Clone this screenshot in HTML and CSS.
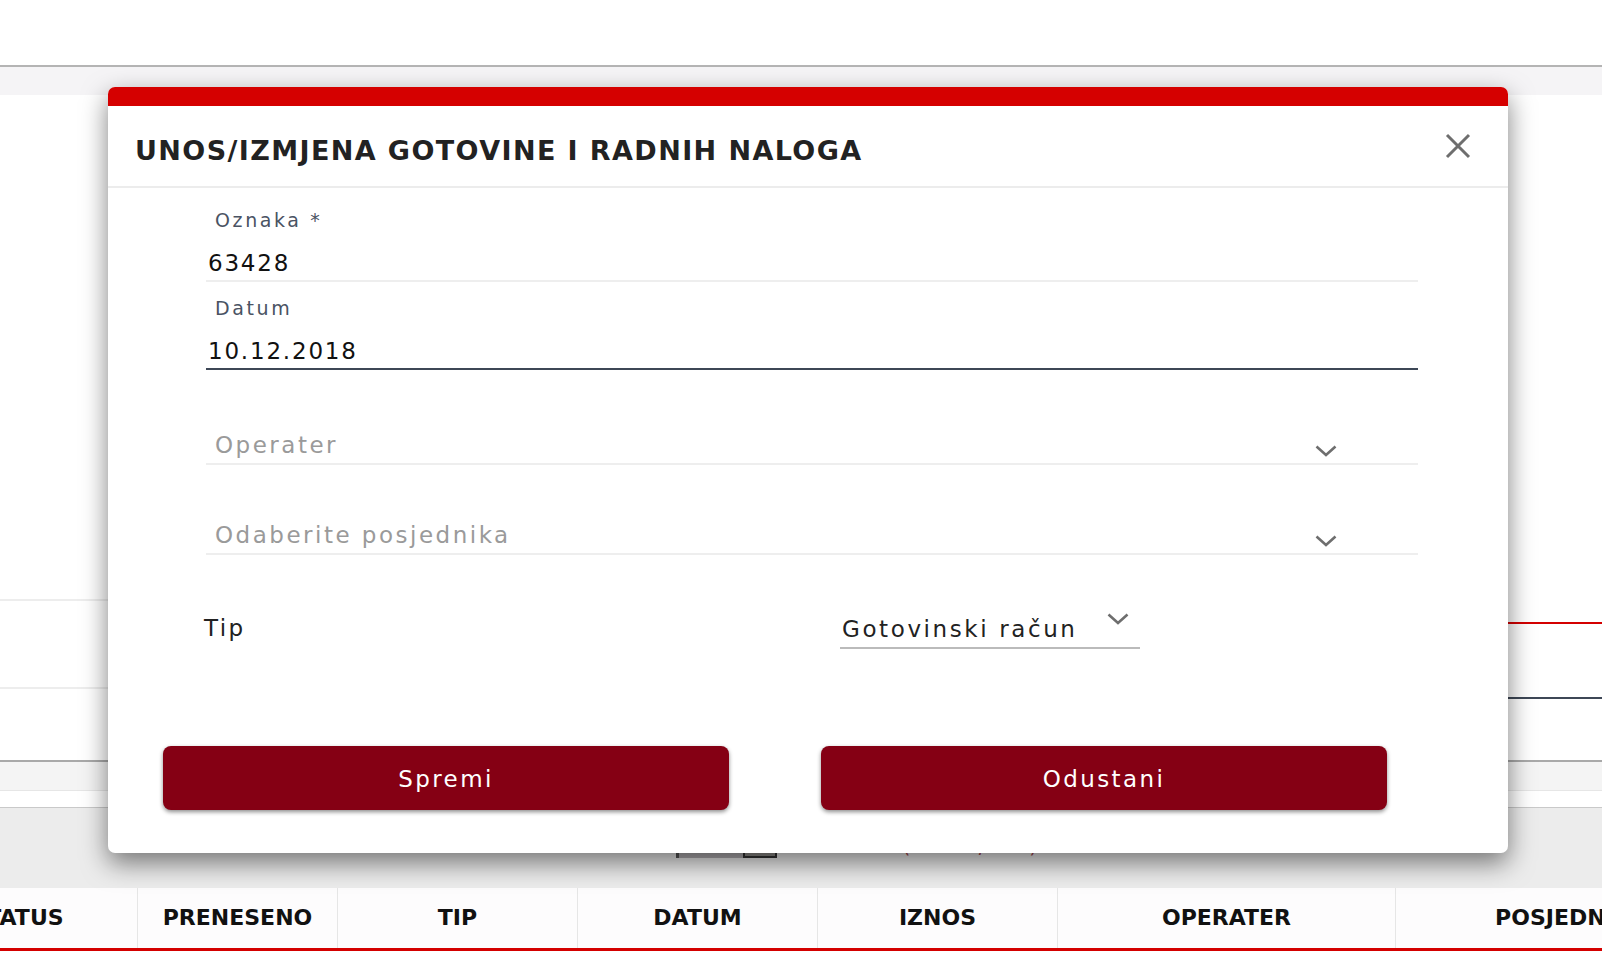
FILE: index.html
```html
<!DOCTYPE html>
<html lang="hr">
  <head>
    <meta charset="UTF-8" />
    <meta name="viewport" content="width=device-width, initial-scale=1.0" />
    <title>Gotovina i radni nalozi</title>
    <link rel="stylesheet" href="styles.css">
  </head>
  <body>
    <div class="topbar"></div>
    <div class="subnav"></div>

    <div class="content">
      <div class="list">
        <div class="list-row"></div>
        <div class="list-row"></div>
      </div>
      <div class="side">
        <div class="side-line red"></div>
        <div class="side-line dark"></div>
      </div>
    </div>

    <div class="toolbar"></div>
    <div class="pager-area">
      <div class="pager">
        <span class="pager-box"><span class="pager-btn"></span></span>
        <span class="pager-text">1 - 10 (od 1 / 25) stranica</span>
      </div>
    </div>

    <div class="grid-head">
      <div class="col col-status">STATUS</div>
      <div class="col col-preneseno">PRENESENO</div>
      <div class="col col-mid">TIP</div>
      <div class="col col-mid">DATUM</div>
      <div class="col col-mid">IZNOS</div>
      <div class="col col-operater">OPERATER</div>
      <div class="col col-posjednik">POSJEDNIK</div>
    </div>

    <!-- dialog -->
    <div class="modal">
      <div class="modal-bar"></div>
      <div class="modal-head">
        <h1 class="modal-title">UNOS/IZMJENA GOTOVINE I RADNIH NALOGA</h1>
        <svg class="close" width="26" height="26" viewBox="0 0 26 26">
          <path d="M2 2 L24 24 M24 2 L2 24" stroke="#6e6e6e" stroke-width="3" fill="none" />
        </svg>
      </div>

      <div class="modal-body">
        <div class="field">
          <div class="field-label">Oznaka *</div>
          <div class="field-value">63428</div>
        </div>
        <div class="field field-focus">
          <div class="field-label">Datum</div>
          <div class="field-value">10.12.2018</div>
        </div>

        <div class="select select-first">
          <span class="placeholder">Operater</span>
          <svg class="chevron" width="22" height="12" viewBox="0 0 22 12">
            <polyline points="1.5,1.5 11,10 20.5,1.5" stroke="#6e6e6e" stroke-width="2.6" fill="none" />
          </svg>
        </div>
        <div class="select">
          <span class="placeholder">Odaberite posjednika</span>
          <svg class="chevron" width="22" height="12" viewBox="0 0 22 12">
            <polyline points="1.5,1.5 11,10 20.5,1.5" stroke="#6e6e6e" stroke-width="2.6" fill="none" />
          </svg>
        </div>

        <div class="tip-row">
          <span class="tip-label">Tip</span>
          <div class="tip-select">
            <span class="tip-value">Gotovinski račun</span>
            <svg class="tip-chevron" width="22" height="12" viewBox="0 0 22 12">
              <polyline points="1.5,1.5 11,10 20.5,1.5" stroke="#6e6e6e" stroke-width="2.6" fill="none" />
            </svg>
          </div>
        </div>
      </div>

      <div class="modal-actions">
        <button class="btn">Spremi</button>
        <button class="btn">Odustani</button>
      </div>
    </div>
  </body>
</html>
```

FILE: styles.css
```css
body {
  margin: 0;
  padding: 0;
  width: 1602px;
  height: 956px;
  overflow: hidden;
  position: relative;
  font-family: "DejaVu Sans", Verdana, sans-serif;
  background-color: #fff;
}

/* page behind the dialog */
.topbar {
  height: 65px;
  background-color: #fff;
  border-bottom: 2px solid #b4b4b4;
}

.subnav {
  height: 28px;
  background-color: #f5f4f6;
}

.content {
  display: flex;
  height: 665px;
}

.list {
  flex: 1;
  padding-top: 504px;
}

.list-row {
  height: 86px;
  border-top: 2px solid #ededed;
}

.side {
  width: 420px;
  padding-top: 527px;
}

.side-line {
  height: 0;
}

.side-line.red {
  border-top: 2px solid #d40000;
}

.side-line.dark {
  margin-top: 73px;
  border-top: 2px solid #3d4756;
}

.toolbar {
  height: 28px;
  background-color: #f4f4f4;
  border-top: 2px solid #a9a9a9;
  border-bottom: 1px solid #e6e6e6;
}

.pager-area {
  height: 80px;
  margin-top: 16px;
  background-color: #ececec;
  border-top: 1px solid #c9c9c9;
}

.pager {
  display: flex;
  align-items: flex-end;
  padding-top: 22px;
  padding-left: 676px;
}

.pager-box {
  display: flex;
  justify-content: flex-end;
  width: 98px;
  height: 28px;
  background-color: #b0adb0;
  border-left: 3px solid #555;
}

.pager-btn {
  width: 30px;
  height: 26px;
  background-color: #8e8c88;
  border: 2px solid #333;
  border-top: none;
}

.pager-text {
  margin-left: 40px;
  font-size: 20px;
  letter-spacing: 3px;
  color: #a3484f;
}

.grid-head {
  display: flex;
  height: 60px;
  background-color: #fdfcfd;
  border-bottom: 3px solid #d40000;
}

.col {
  flex: none;
  line-height: 60px;
  text-align: center;
  font-weight: bold;
  font-size: 22px;
  color: #111;
  border-right: 1px solid #e6e6e6;
  white-space: nowrap;
}

.col-status {
  width: 240px;
  margin-left: -103px;
}

.col-preneseno {
  width: 199px;
}

.col-mid {
  width: 239px;
}

.col-operater {
  width: 337px;
}

.col-posjednik {
  width: 334px;
}

/* dialog */
.modal {
  position: absolute;
  left: 108px;
  top: 87px;
  width: 1400px;
  background-color: #fff;
  border-radius: 7px;
  overflow: hidden;
  box-shadow: 0 10px 26px rgba(0, 0, 0, 0.5);
}

.modal-bar {
  height: 19px;
  background-color: #d50000;
}

.modal-head {
  display: flex;
  justify-content: space-between;
  align-items: flex-start;
  height: 72px;
  padding: 8px 37px 0 27px;
  border-bottom: 2px solid #ececec;
}

.modal-title {
  margin: 0;
  font-size: 27px;
  line-height: 74px;
  letter-spacing: 1.4px;
  font-weight: bold;
  color: #222;
}

.close {
  margin-top: 19px;
}

.modal-body {
  padding: 20px 90px 0 98px;
}

.field + .field {
  margin-top: 14px;
}

.field {
  border-bottom: 2px solid #eeeeee;
}

.field-focus {
  border-bottom-color: #3d4756;
}

.field-label {
  padding-left: 9px;
  font-size: 19px;
  line-height: 24px;
  letter-spacing: 2.6px;
  color: #4a5363;
}

.field-value {
  margin-top: 14px;
  padding-left: 2px;
  font-size: 23px;
  line-height: 34px;
  letter-spacing: 1.8px;
  color: #111;
}

.select {
  display: flex;
  justify-content: space-between;
  margin-top: 54px;
  height: 34px;
  border-bottom: 2px solid #eeeeee;
}

.select-first {
  margin-top: 59px;
}

.placeholder {
  padding-left: 9px;
  font-size: 23px;
  line-height: 32px;
  letter-spacing: 2.5px;
  color: #9a9a9a;
}

.chevron {
  align-self: flex-end;
  margin: 0 81px 6px 0;
}

.tip-row {
  display: flex;
  align-items: flex-end;
  margin-top: 54px;
}

.tip-label {
  flex: none;
  width: 636px;
  margin-left: -2px;
  font-size: 23px;
  line-height: 34px;
  padding-bottom: 4px;
  letter-spacing: 2.4px;
  color: #222;
}

.tip-select {
  display: flex;
  justify-content: space-between;
  width: 300px;
  height: 38px;
  border-bottom: 2px solid #bbbbbb;
}

.tip-value {
  padding-left: 2px;
  font-size: 23px;
  line-height: 40px;
  letter-spacing: 2.6px;
  color: #222;
}

.tip-chevron {
  margin: 4px 11px 0 0;
}

.modal-actions {
  display: flex;
  gap: 92px;
  margin-top: 97px;
  padding: 0 0 43px 55px;
}

.btn {
  width: 566px;
  height: 64px;
  padding-top: 2px;
  background-color: #850014;
  color: #fff;
  border: none;
  border-radius: 8px;
  box-shadow: 0 2px 4px rgba(0, 0, 0, 0.45);
  font-family: "DejaVu Sans", Verdana, sans-serif;
  font-size: 23px;
  letter-spacing: 2.4px;
  cursor: pointer;
}
```
